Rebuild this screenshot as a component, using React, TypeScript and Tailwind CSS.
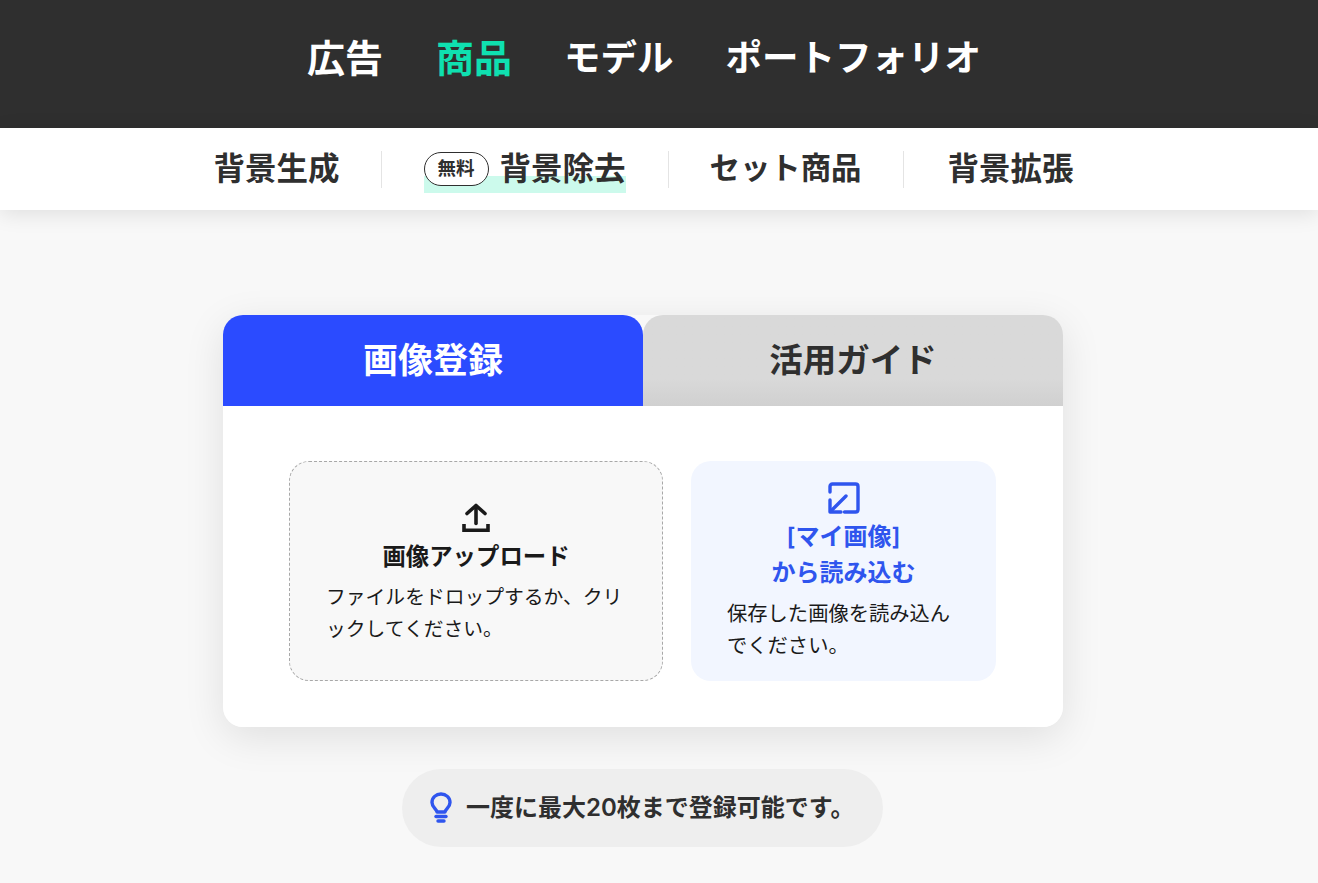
const FONT = "font-['Inter','Noto_Sans_CJK_JP',sans-serif]"

function UploadIcon() {
  return (
    <svg width="30" height="30" viewBox="0 0 30 30" fill="none" stroke="#1a1a1a" strokeWidth="3.6" strokeLinecap="round" strokeLinejoin="round">
      <path d="M15 20.5V3" />
      <path d="M6 10.5L15 2.5L24 10.5" />
      <path d="M3 21V27.3H27V21" strokeLinecap="butt" strokeLinejoin="miter" />
    </svg>
  )
}

function ImportIcon() {
  return (
    <svg width="32" height="32" viewBox="0 0 32 32" fill="none" stroke="#2f55ee" strokeWidth="3.4" strokeLinecap="round" strokeLinejoin="round">
      <path d="M2 10V4.5C2 3 3 2 4.5 2H27.5C29 2 30 3 30 4.5V27.5C30 29 29 30 27.5 30H16.5" />
      <path d="M18 14L3 29" />
      <path d="M2 18V30H13" />
    </svg>
  )
}

function BulbIcon() {
  return (
    <svg width="22" height="32" viewBox="0 0 22 32" fill="none" stroke="#2f55ee" strokeWidth="3.4" strokeLinecap="round" strokeLinejoin="round">
      <path d="M7 20C6.5 17 2 15.5 2 10.5C2 5.5 6 2 11 2C16 2 20 5.5 20 10.5C20 15.5 15.5 17 15 20H7Z" />
      <path d="M6 24.5H16" />
      <path d="M8 29H14" />
    </svg>
  )
}

export default function App() {
  return (
    <div className={`${FONT} min-h-[883px] bg-[#f8f8f8] text-[#2f2f2f]`}>
      {/* Top nav */}
      <div className="h-32 bg-[#2f2f2f] pr-[30px] pb-[11px] flex items-center justify-center gap-[50px] text-[36.5px] font-bold text-white">
        <span className="mr-[3px] text-[38px]">広告</span>
        <span className="mr-[2px] text-[38px] text-[#0fe0b0]">商品</span>
        <span>モデル</span>
        <span className="ml-[2px]">ポートフォリオ</span>
      </div>

      {/* Sub nav */}
      <div className="relative h-[82px] bg-white pr-[31px] flex items-center justify-center text-[31.5px] font-bold shadow-[0_4px_20px_rgba(0,0,0,0.1)]">
        <span className="pr-[41px]">背景生成</span>
        <div className="h-[37px] w-px bg-[#e4e4e4]" />
        <div className="relative mx-[42px] flex items-center gap-[11px]">
          <div className="absolute left-0 right-0 top-[31px] h-[17px] bg-[#ccfaec]" />
          <span className="relative w-[65px] h-[34px] flex items-center justify-center rounded-full border border-[#2f2f2f] text-[18.5px] font-semibold bg-white">無料</span>
          <span className="relative">背景除去</span>
        </div>
        <div className="h-[37px] w-px bg-[#e4e4e4]" />
        <span className="pl-[41px] pr-[42px] text-[30.4px]">セット商品</span>
        <div className="h-[37px] w-px bg-[#e4e4e4]" />
        <span className="pl-[43px]">背景拡張</span>
      </div>

      {/* Card */}
      <div className="pr-8 pt-[105px] flex flex-col items-center">
        <div className="w-[840px] rounded-[20px] shadow-[0_10px_40px_rgba(0,0,0,0.1)]">
          <div className="flex h-[91px]">
            <div className="flex-1 rounded-t-[20px] bg-[#2b4bff] text-white flex items-center justify-center text-[35px] font-bold">画像登録</div>
            <div className="flex-1 rounded-t-[20px] bg-gradient-to-b from-[#d9d9d9] from-70% to-[#d0d0d0] flex items-center justify-center text-[33.5px] font-bold">活用ガイド</div>
          </div>
          <div className="bg-white rounded-b-[20px] h-[321px] pt-[55px] pl-[66px] flex gap-7">
            <div className="w-[374px] h-[220px] rounded-[20px] border border-dashed border-[#a8a8a8] bg-[#f8f8f8] flex flex-col items-center pt-[41px]">
              <UploadIcon />
              <div className="mt-[6px] text-[23.4px] leading-[36px] font-semibold text-[#1a1a1a]">画像アップロード</div>
              <p className="mt-[6px] w-[300px] text-[19.8px] leading-[32px] text-[#1a1a1a]">ファイルをドロップするか、クリックしてください。</p>
            </div>
            <div className="w-[305px] h-[220px] rounded-[20px] bg-[#f2f6ff] flex flex-col items-center pt-[21px]">
              <ImportIcon />
              <div className="mt-[5px] text-center text-[24px] leading-[36px] font-semibold text-[#2f55ee]">
                [マイ画像]
                <br />
                から読み込む
              </div>
              <p className="mt-[7px] w-[233px] text-[20.3px] leading-[32px] text-[#1a1a1a]">保存した画像を読み込んでください。</p>
            </div>
          </div>
        </div>

        {/* Tip */}
        <div className="mt-[42px] mr-px w-[481px] h-[78px] rounded-full bg-[#eeeeee] flex items-center pl-[28px] gap-[14px] text-[24px] font-semibold">
          <BulbIcon />
          <span>一度に最大20枚まで登録可能です。</span>
        </div>
      </div>
    </div>
  )
}
